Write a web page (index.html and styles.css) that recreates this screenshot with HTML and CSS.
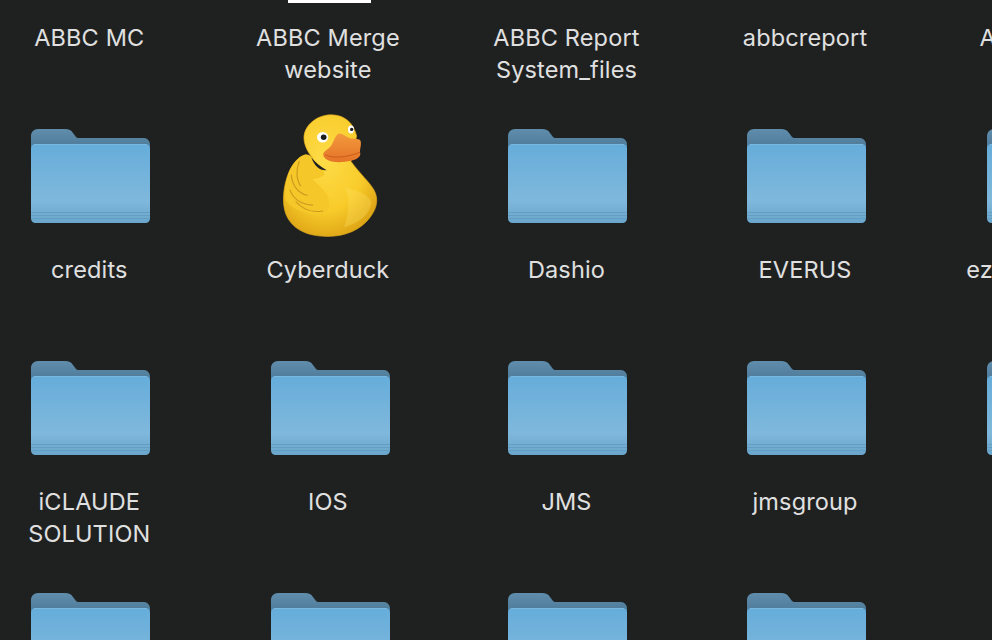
FILE: index.html
```html
<!DOCTYPE html>
<html lang="en">
<head>
  <meta charset="UTF-8" />
  <meta name="viewport" content="width=device-width, initial-scale=1" />
  <title>Finder</title>
  <link rel="stylesheet" href="styles.css">
</head>
<body>
  <!-- shared folder icon -->
  <svg class="defs" aria-hidden="true">
    <defs>
      <linearGradient id="folderBack" x1="0" y1="0" x2="0" y2="1">
        <stop offset="0" stop-color="#5f8dab" />
        <stop offset="1" stop-color="#446f8d" />
      </linearGradient>
      <linearGradient id="folderFront" x1="0" y1="0" x2="0" y2="1">
        <stop offset="0" stop-color="#66addb" />
        <stop offset="0.72" stop-color="#7fb8dc" />
        <stop offset="0.86" stop-color="#74aed3" />
        <stop offset="1" stop-color="#6aa6cc" />
      </linearGradient>
      <symbol id="folder" viewBox="0 0 119 94">
        <path d="M0 7C0 3 3 0 7 0H34C38 0 40 1 42 4L45 8C46 9 47 9 49 9H113C116 9 119 12 119 15V30H0Z" fill="url(#folderBack)" />
        <rect x="0" y="15" width="119" height="79" rx="4.5" fill="url(#folderFront)" />
        <path d="M3 15.5H116" stroke="#8cc6e8" stroke-width="0.8" opacity="0.6" />
        <path d="M0 83.5H119M0 86.5H119M0 89.5H119" stroke="#5f9abf" stroke-width="1" opacity="0.75" />
      </symbol>
    </defs>
  </svg>

  <main class="icon-grid">
    <!-- row 1, cut by the window top -->
    <div class="item">
      <div class="icon"><svg class="folder"><use href="#folder" /></svg></div>
      <div class="label">ABBC MC</div>
    </div>
    <div class="item">
      <div class="icon"><div class="doc"></div></div>
      <div class="label">ABBC Merge website</div>
    </div>
    <div class="item">
      <div class="icon"><svg class="folder"><use href="#folder" /></svg></div>
      <div class="label">ABBC Report System_files</div>
    </div>
    <div class="item">
      <div class="icon"><svg class="folder"><use href="#folder" /></svg></div>
      <div class="label">abbcreport</div>
    </div>
    <div class="item">
      <div class="icon"><svg class="folder"><use href="#folder" /></svg></div>
      <div class="label">Accounting</div>
    </div>

    <!-- row 2 -->
    <div class="item">
      <div class="icon"><svg class="folder"><use href="#folder" /></svg></div>
      <div class="label">credits</div>
    </div>
    <div class="item">
      <div class="icon">
        <svg class="duck" viewBox="0 0 360 405" preserveAspectRatio="none">
          <defs>
            <radialGradient id="duckBody" cx="0.45" cy="0.36" r="0.72">
              <stop offset="0" stop-color="#fedc48" />
              <stop offset="0.6" stop-color="#f8cb2a" />
              <stop offset="1" stop-color="#d89d12" />
            </radialGradient>
            <linearGradient id="duckBeak" x1="0" y1="0" x2="0" y2="1">
              <stop offset="0" stop-color="#f39a3c" />
              <stop offset="1" stop-color="#e57328" />
            </linearGradient>
          </defs>
          <path d="M185 27C225 28 250 52 260 92L243 170C270 208 300 235 312 258C326 285 322 312 300 342C272 380 225 402 165 400C110 398 65 378 47 330C35 295 40 245 56 205C66 180 82 158 104 150C116 148 124 154 130 162C112 142 100 115 102 92C106 55 145 26 185 27Z" fill="url(#duckBody)" stroke="#e0aa1a" stroke-width="2" />
          <path d="M104 150C120 148 136 170 150 186C158 195 163 200 163 210C150 225 134 220 128 225C150 250 178 268 178 300C178 330 150 340 120 332C82 322 52 302 46 285C42 250 52 205 66 185C78 165 90 153 104 150Z" fill="#f5c728" />
          <path d="M124 158C136 172 150 186 170 197C150 199 134 186 124 158Z" fill="#1f2121" />
          <path d="M88 170C78 195 78 225 92 245M64 212C66 240 82 268 112 274M60 258C70 285 95 302 128 304M78 294C100 318 130 328 158 322" fill="none" stroke="#cf9a20" stroke-width="3.5" stroke-linecap="round" />
          <path d="M222 250C240 270 240 320 222 372C262 360 300 335 304 295C300 280 280 262 222 250Z" fill="#ffe666" opacity="0.3" />
          <path d="M205 85C214 82 224 92 238 98C252 102 270 98 272 108C275 122 268 132 271 146C272 162 250 168 225 171C195 175 165 170 160 152C157 142 170 136 180 126C190 116 194 92 205 85Z" fill="url(#duckBeak)" />
          <path d="M166 150C190 162 230 158 270 142" fill="none" stroke="#c95c1a" stroke-width="3" />
          <ellipse cx="158" cy="96" rx="17" ry="16" fill="#fff" />
          <circle cx="161" cy="96" r="8.5" fill="#1c1c1c" />
          <ellipse cx="243" cy="72" rx="9" ry="12" fill="#fff" />
          <circle cx="245" cy="72" r="5" fill="#1c1c1c" />
        </svg>
      </div>
      <div class="label">Cyberduck</div>
    </div>
    <div class="item">
      <div class="icon"><svg class="folder"><use href="#folder" /></svg></div>
      <div class="label">Dashio</div>
    </div>
    <div class="item">
      <div class="icon"><svg class="folder"><use href="#folder" /></svg></div>
      <div class="label">EVERUS</div>
    </div>
    <div class="item">
      <div class="icon"><svg class="folder"><use href="#folder" /></svg></div>
      <div class="label">ezAccounting</div>
    </div>

    <!-- row 3 -->
    <div class="item">
      <div class="icon"><svg class="folder"><use href="#folder" /></svg></div>
      <div class="label">iCLAUDE SOLUTION</div>
    </div>
    <div class="item">
      <div class="icon"><svg class="folder"><use href="#folder" /></svg></div>
      <div class="label">IOS</div>
    </div>
    <div class="item">
      <div class="icon"><svg class="folder"><use href="#folder" /></svg></div>
      <div class="label">JMS</div>
    </div>
    <div class="item">
      <div class="icon"><svg class="folder"><use href="#folder" /></svg></div>
      <div class="label">jmsgroup</div>
    </div>
    <div class="item">
      <div class="icon"><svg class="folder"><use href="#folder" /></svg></div>
      <div class="label"></div>
    </div>

    <!-- row 4, cut by the window bottom -->
    <div class="item">
      <div class="icon"><svg class="folder"><use href="#folder" /></svg></div>
    </div>
    <div class="item">
      <div class="icon"><svg class="folder"><use href="#folder" /></svg></div>
    </div>
    <div class="item">
      <div class="icon"><svg class="folder"><use href="#folder" /></svg></div>
    </div>
    <div class="item">
      <div class="icon"><svg class="folder"><use href="#folder" /></svg></div>
    </div>
  </main>
</body>
</html>
```

FILE: styles.css
```css
*, *::before, *::after {
  box-sizing: border-box;
}

html, body {
  height: 100%;
}

body {
  margin: 0;
  overflow: hidden;
  background: #1f2121;
  color: #e0e0e0;
  font-family: Inter, "Liberation Sans", sans-serif;
}

.defs {
  display: block;
  width: 0;
  height: 0;
}

.icon-grid {
  display: grid;
  grid-template-columns: repeat(5, 238.6px);
  grid-auto-rows: 232px;
  width: 1193px;
  margin: -125px 0 0 -30px;
}

.item {
  display: flex;
  flex-direction: column;
  align-items: center;
}

.icon {
  display: flex;
  align-items: center;
  justify-content: center;
  flex: none;
  width: 100%;
  height: 136px;
}

.folder {
  display: block;
  width: 119px;
  height: 94px;
  margin: 2px 0 0 3px;
}

.item:nth-child(5n+2) .folder,
.item:nth-child(5n) .folder {
  margin-left: 5px;
}

.duck {
  display: block;
  width: 120px;
  height: 132px;
  margin: -7px 0 0 4px;
}

.doc {
  width: 83px;
  height: 120px;
  margin-left: 3px;
  background: #fff;
}

.label {
  width: 160px;
  margin-top: 11px;
  font-size: 23.5px;
  letter-spacing: 0.15px;
  line-height: 32px;
  text-align: center;
}
```
